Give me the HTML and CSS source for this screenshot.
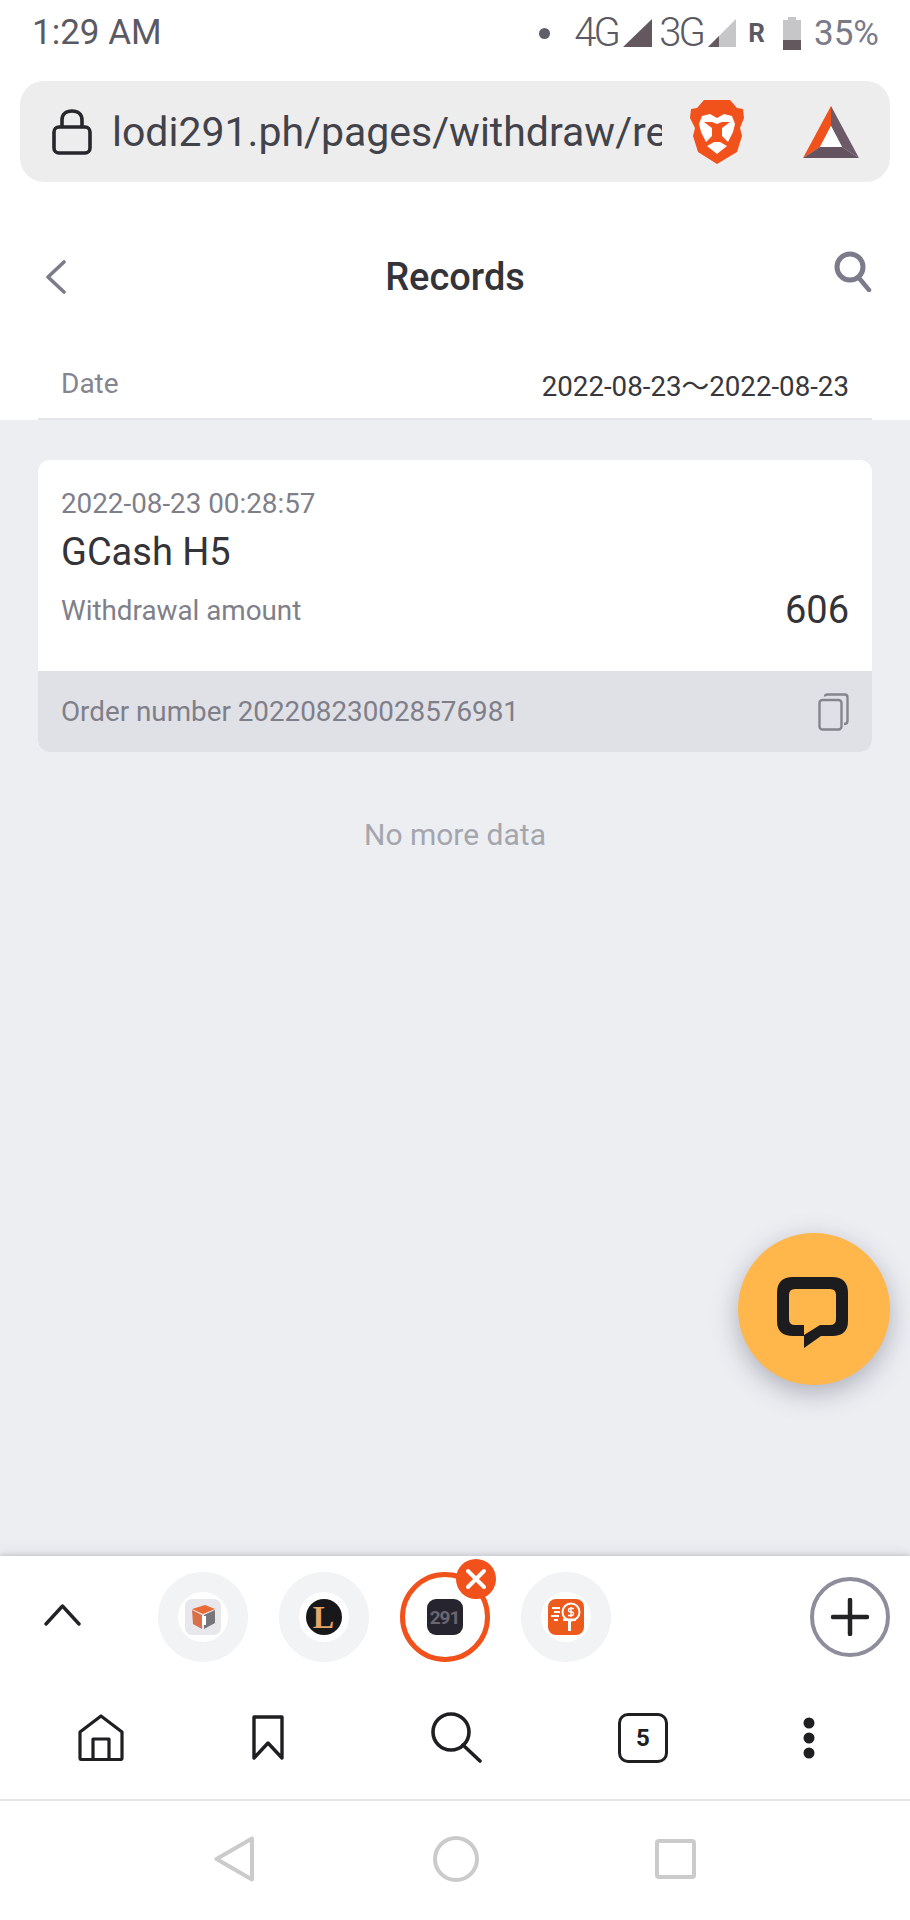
FILE: index.html
```html
<!DOCTYPE html>
<html lang="en">
<head>
<meta charset="utf-8">
<title>Records</title>
<link rel="stylesheet" href="styles.css">
</head>
<body>
<div class="phone">
  <header class="status">
    <span class="clock">1:29 AM</span>
    <div class="status-right">
      <span class="dot"></span>
      <span class="net">4G</span>
      <svg class="sig" width="29" height="28" viewBox="0 0 29 28"><path d="M29 0V28H0Z" fill="#64585f"/></svg>
      <span class="net">3G</span>
      <svg class="sig" width="28" height="28" viewBox="0 0 28 28"><path d="M28 0V28H0Z" fill="#c6c6c8"/><path d="M11 17V28H0Z" fill="#64585f"/></svg>
      <span class="roam">R</span>
      <svg class="batt" width="18" height="33" viewBox="0 0 18 33"><path d="M5 0H13V3H18V33H0V3H5Z" fill="#c6c6c8"/><path d="M0 23H18V33H0Z" fill="#64585f"/></svg>
      <span class="pct">35%</span>
    </div>
  </header>

  <div class="urlbar">
    <svg class="lock" width="40" height="46" viewBox="0 0 40 46"><rect x="2" y="18" width="36" height="26" rx="5" fill="none" stroke="#26262b" stroke-width="3.6"/><path d="M10 18V11C10 5 14 2 20 2S30 5 30 11V18" fill="none" stroke="#26262b" stroke-width="3.6"/></svg>
    <span class="url">lodi291.ph/pages/withdraw/records</span>
    <svg class="brave" width="54" height="64" viewBox="0 0 54 64"><path d="M14 0H40L47 8L53 9L54 18L50 28L52 36L47 52L27 64L8 52L3 36L5 28L0 18L1 9L7 8Z" fill="#f1511b"/><path d="M9 24L12 16L20 14L27 18L34 14L42 16L45 24L43 32L38 42L32 36V28L40 22H32L27 24L22 22H14L22 28V36L16 42L11 32Z" fill="#fff"/><path d="M17 46L24 42H30L37 46L27 54Z" fill="#fff"/></svg>
    <svg class="bat" width="56" height="52" viewBox="0 0 56 52"><path d="M28 0L0 52L17 41L28 20Z" fill="#f1511b"/><path d="M28 0L56 52L39 41L28 20Z" fill="#6c5a68"/><path d="M0 52H56L39 41H17Z" fill="#65535f"/><path d="M28 20L39 41H17Z" fill="#fff"/></svg>
  </div>

  <main class="page">
    <section class="top">
      <div class="nav">
        <svg class="back" width="22" height="34" viewBox="0 0 22 34"><path d="M19 2L3 17L19 32" fill="none" stroke="#7b7b8b" stroke-width="3.6" stroke-linecap="round" stroke-linejoin="round"/></svg>
        <h1 class="title">Records</h1>
        <svg class="find" width="38" height="41" viewBox="0 0 38 41"><circle cx="16" cy="16" r="13" fill="none" stroke="#7b7b8b" stroke-width="5"/><path d="M25 27L35 39" fill="none" stroke="#7b7b8b" stroke-width="4.5" stroke-linecap="round"/></svg>
      </div>
      <div class="date-row">
        <span class="date-label">Date</span>
        <span class="date-value">2022-08-23～2022-08-23</span>
      </div>
    </section>

    <section class="list">
      <article class="card">
        <div class="card-body">
          <div class="stamp">2022-08-23 00:28:57</div>
          <div class="method">GCash H5</div>
          <div class="amount-row">
            <span class="amount-label">Withdrawal amount</span>
            <span class="amount">606</span>
          </div>
        </div>
        <div class="card-foot">
          <span>Order number 202208230028576981</span>
          <svg width="31" height="38" viewBox="0 0 31 38"><rect x="1.5" y="7" width="22" height="29.500" rx="3" fill="none" stroke="#85858f" stroke-width="2.400"/><path d="M7 3.500Q7 1.500 9.500 1.500H26.500Q29.500 1.500 29.500 4.500V28Q29.500 31 26 31" fill="none" stroke="#85858f" stroke-width="2.400"/></svg>
        </div>
      </article>
      <div class="no-more">No more data</div>
    </section>

    <button class="fab" aria-label="Chat">
      <svg width="71" height="71" viewBox="0 0 71 71"><path fill-rule="evenodd" d="M16 0H55Q71 0 71 16V44Q71 59 55 59H44L27 71V59H16Q0 59 0 44V16Q0 0 16 0ZM18 12Q12 12 12 18V42Q12 48 18 48H27V58L43 48H53Q59 48 59 42V18Q59 12 53 12Z" fill="#1c1c1e"/></svg>
    </button>
  </main>

  <section class="tray">
    <div class="tabs">
      <svg class="up" width="37" height="23" viewBox="0 0 37 23"><path d="M2 21L18.500 3L35 21" fill="none" stroke="#232326" stroke-width="3.400" stroke-linecap="round" stroke-linejoin="round"/></svg>
      <div class="tab-list">
        <div class="tab">
          <svg class="fav" width="36" height="36" viewBox="0 0 36 36"><rect width="36" height="36" rx="7" fill="#e8e8ec"/><path d="M7 10L20 6L30 10L18 15Z" fill="#ea6a35"/><path d="M7 11L17 16V30L8 25Z" fill="#d9704a"/><path d="M19 16L30 11V24L19 30Z" fill="#77767a"/><path d="M17 17H21V26H17Z" fill="#fff"/></svg>
        </div>
        <div class="tab">
          <span class="fav fav-l">L</span>
        </div>
        <div class="tab tab-active">
          <span class="fav fav-291">291</span>
          <span class="close">
            <svg width="22" height="22" viewBox="0 0 22 22"><path d="M3 3L19 19M19 3L3 19" stroke="#fff" stroke-width="4" stroke-linecap="round"/></svg>
          </span>
        </div>
        <div class="tab">
          <svg class="fav" width="36" height="36" viewBox="0 0 36 36"><rect width="36" height="36" rx="8" fill="#ec5a1c"/><circle cx="23" cy="13" r="8.500" fill="none" stroke="#fff" stroke-width="2"/><path d="M20 32V22H15V19.500H28V22H23V32Z" fill="#fff"/><path d="M4 9H12M6 13H12M3 17H11M6 21H10" stroke="#fff" stroke-width="2"/><path d="M26 9.500H22Q20.500 9.500 20.500 11.200T22 13H24Q25.500 13 25.500 14.700T24 16.500H20M23 8V18" fill="none" stroke="#fff" stroke-width="1.400"/></svg>
        </div>
      </div>
      <button class="add" aria-label="New tab">
        <svg width="38" height="38" viewBox="0 0 38 38"><path d="M19 2V36M2 19H36" stroke="#232326" stroke-width="4.500" stroke-linecap="round"/></svg>
      </button>
    </div>

    <nav class="toolbar">
      <svg class="tool-home" width="46" height="47" viewBox="0 0 46 47"><path d="M2 44.500V18L23 2L44 18V44.500Q44 45.500 42 45.500H4Q2 45.500 2 44.500ZM15 45V25H31V45" fill="none" stroke="#1f1f22" stroke-width="3.200" stroke-linejoin="round"/></svg>
      <svg class="tool-mark" width="32" height="45" viewBox="0 0 32 45"><path d="M2 2H30V43L16 28L2 43Z" fill="none" stroke="#1f1f22" stroke-width="3.400" stroke-linejoin="round"/></svg>
      <svg class="tool-find" width="52" height="51" viewBox="0 0 52 51"><circle cx="20" cy="20" r="18" fill="none" stroke="#1f1f22" stroke-width="3.600"/><path d="M32 33L49 49" stroke="#1f1f22" stroke-width="3.600" stroke-linecap="round"/></svg>
      <span class="tool-count">5</span>
      <svg class="tool-more" width="12" height="42" viewBox="0 0 12 42"><circle cx="6" cy="6" r="5.500" fill="#1f1f22"/><circle cx="6" cy="21" r="5.500" fill="#1f1f22"/><circle cx="6" cy="36" r="5.500" fill="#1f1f22"/></svg>
    </nav>

    <nav class="system">
      <svg class="sys-back" width="40" height="46" viewBox="0 0 40 46"><path d="M38 2.500V43.500L2.500 23Z" fill="none" stroke="#cbcbcb" stroke-width="4" stroke-linejoin="round"/></svg>
      <svg class="sys-home" width="46" height="46" viewBox="0 0 46 46"><circle cx="23" cy="23" r="21" fill="none" stroke="#cbcbcb" stroke-width="4"/></svg>
      <svg class="sys-recent" width="41" height="40" viewBox="0 0 41 40"><rect x="2" y="2" width="37" height="36" rx="2" fill="none" stroke="#cbcbcb" stroke-width="4"/></svg>
    </nav>
  </section>
</div>
</body>
</html>
```

FILE: styles.css
```css
* {
  box-sizing: border-box;
}

html,
body {
  margin: 0;
  padding: 0;
}

body {
  font-family: Roboto, "Noto Sans CJK SC", sans-serif;
  background: #fff;
}

svg {
  display: block;
  flex: none;
}

.phone {
  width: 910px;
  height: 1920px;
  display: flex;
  flex-direction: column;
  overflow: hidden;
  background: #fff;
}

/* status bar */
.status {
  height: 66px;
  padding: 0 32px;
  display: flex;
  align-items: center;
  justify-content: space-between;
  flex: none;
}

.clock {
  margin-top: -2px;
  font-size: 35px;
  color: #5b5a63;
}

.status-right {
  display: flex;
  align-items: center;
  margin-right: -1px;
}

.dot {
  width: 11px;
  height: 11px;
  border-radius: 50%;
  background: #5f5f69;
  margin-right: 24px;
}

.net {
  font-size: 40px;
  font-weight: 300;
  letter-spacing: -3px;
  color: #5b5a63;
  line-height: 40px;
  width: 44px;
}

.sig {
  margin: 0 7px 0 5px;
}

.roam {
  font-size: 26px;
  font-weight: 700;
  color: #5b5a63;
  margin: 0 18px 0 5px;
}

.batt {
  margin-right: 13px;
}

.pct {
  font-size: 35px;
  color: #7a7a88;
}

/* address bar */
.urlbar {
  flex: none;
  height: 101px;
  margin: 15px 20px 0;
  padding: 0 30px 0 32px;
  display: flex;
  align-items: center;
  background: #eeeded;
  border-radius: 24px;
}

.url {
  width: 550px;
  margin-left: 20px;
  overflow: hidden;
  white-space: nowrap;
  font-size: 41px;
  color: #42424a;
}

.brave {
  margin-left: 28px;
}

.bat {
  margin-left: 59px;
}

/* page */
.page {
  flex: 1;
  min-height: 0;
  position: relative;
  display: flex;
  flex-direction: column;
  background: #eceef2;
}

.top {
  background: #fff;
  padding: 0 38px;
  flex: none;
}

.nav {
  height: 170px;
  margin-top: -4px;
  padding: 16px 0 0;
  display: grid;
  grid-template-columns: 1fr auto 1fr;
  align-items: center;
}

.back {
  margin: 12px 0 0 7px;
}

.find {
  justify-self: end;
}

.title {
  margin: 12px 0 0;
  font-size: 38px;
  font-weight: 500;
  color: #333338;
}

.date-row {
  height: 73px;
  margin-top: -1px;
  padding: 2px 23px 0;
  display: flex;
  align-items: center;
  justify-content: space-between;
  border-bottom: 2px solid #e4e5e9;
}

.date-label {
  font-size: 28px;
  color: #85858f;
}

.date-value {
  font-size: 27.7px;
  color: #37373c;
}

.list {
  padding: 40px 38px 0;
}

.card {
  border-radius: 12px;
  overflow: hidden;
  background: #fff;
}

.card-body {
  height: 211px;
  padding: 23px 23px 0;
}

.stamp {
  font-size: 27.8px;
  line-height: 42px;
  color: #7f7f8a;
}

.method {
  margin-top: 3px;
  font-size: 38px;
  line-height: 48px;
  color: #333338;
}

.amount-row {
  margin-top: 10px;
  display: flex;
  align-items: center;
  justify-content: space-between;
  height: 48px;
}

.amount-label {
  font-size: 27.8px;
  color: #7f7f8a;
}

.amount {
  font-size: 38px;
  color: #333338;
}

.card-foot {
  height: 81px;
  padding: 0 23px;
  display: flex;
  align-items: center;
  justify-content: space-between;
  background: #e0e1e6;
  font-size: 27.8px;
  color: #7f7f8a;
}

.no-more {
  margin-top: 63px;
  text-align: center;
  font-size: 30px;
  line-height: 40px;
  color: #a5a6ad;
}

.fab {
  position: absolute;
  left: 738px;
  top: 1051px;
  width: 152px;
  height: 152px;
  padding: 0;
  border: 0;
  border-radius: 50%;
  background: #ffb64a;
  box-shadow: 0 8px 26px rgba(60, 60, 80, 0.35);
  display: flex;
  align-items: center;
  justify-content: center;
}

.fab svg {
  margin: 6px 0 0 -4px;
}

/* bottom browser tray */
.tray {
  flex: none;
  height: 364px;
  background: #fff;
  position: relative;
  display: flex;
  flex-direction: column;
  box-shadow: 0 -1px 4px rgba(120, 120, 130, 0.3), 0 -4px 14px rgba(120, 120, 130, 0.12);
}

.tabs {
  height: 122px;
  padding: 0 20px 0 44px;
  display: flex;
  align-items: center;
}

.up {
  margin-top: -5px;
}

.tab-list {
  display: flex;
  gap: 31px;
  margin-left: 76.5px;
  flex: 1;
}

.tab {
  position: relative;
  width: 90px;
  height: 90px;
  border-radius: 50%;
  background: #fff;
  border: 20px solid #f1f3f4;
  display: flex;
  align-items: center;
  justify-content: center;
}

.tab-active {
  border: 5px solid #f1511b;
}

.fav {
  width: 36px;
  height: 36px;
  flex: none;
}

.fav-l {
  border-radius: 50%;
  background: #18181b;
  display: flex;
  align-items: center;
  justify-content: center;
  font-family: "Liberation Serif", serif;
  font-size: 32px;
  font-weight: 700;
  line-height: 36px;
  color: #e6a56a;
}

.fav-291 {
  border-radius: 9px;
  background: #26242e;
  display: flex;
  align-items: center;
  justify-content: center;
  font-size: 19px;
  font-weight: 700;
  letter-spacing: -1px;
  color: #6b6570;
}

.close {
  position: absolute;
  left: 51px;
  top: -18px;
  width: 40px;
  height: 40px;
  border-radius: 50%;
  background: #f1511b;
  display: flex;
  align-items: center;
  justify-content: center;
}

.add {
  width: 80px;
  height: 80px;
  padding: 0;
  background: #fff;
  border: 4.5px solid #8d8d9b;
  border-radius: 50%;
  display: flex;
  align-items: center;
  justify-content: center;
}

.toolbar {
  height: 123px;
  padding: 0 0 2px 78px;
  display: flex;
  align-items: center;
  border-bottom: 2px solid #e6e6e6;
}

.tool-mark {
  margin-left: 128px;
}

.tool-find {
  margin-left: 147px;
}

.tool-count {
  margin-left: 135px;
  width: 50px;
  height: 50px;
  border: 3.4px solid #1f1f22;
  border-radius: 10px;
  display: flex;
  align-items: center;
  justify-content: center;
  font-size: 24px;
  font-weight: 700;
  color: #1f1f22;
}

.tool-more {
  margin-left: 135px;
}

.system {
  flex: 1;
  padding: 0 0 4px 214px;
  display: flex;
  align-items: center;
}

.sys-home {
  margin-left: 179px;
}

.sys-recent {
  margin-left: 176px;
}
```
